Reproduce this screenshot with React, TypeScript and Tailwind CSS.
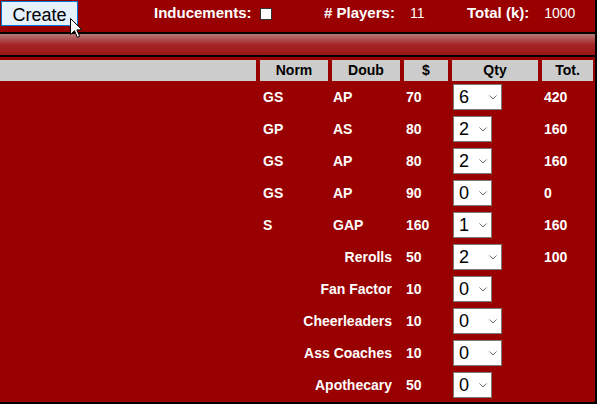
import React from "react";

type PlayerRow = {
  norm: string;
  doub: string;
  cost: number;
  qty: string;
  wide?: boolean;
  total: string;
};

type ExtraRow = {
  label: string;
  cost: number;
  qty: string;
  wide?: boolean;
  total?: string;
};

const players: PlayerRow[] = [
  { norm: "GS", doub: "AP", cost: 70, qty: "6", wide: true, total: "420" },
  { norm: "GP", doub: "AS", cost: 80, qty: "2", total: "160" },
  { norm: "GS", doub: "AP", cost: 80, qty: "2", total: "160" },
  { norm: "GS", doub: "AP", cost: 90, qty: "0", total: "0" },
  { norm: "S", doub: "GAP", cost: 160, qty: "1", total: "160" },
];

const extras: ExtraRow[] = [
  { label: "Rerolls", cost: 50, qty: "2", wide: true, total: "100" },
  { label: "Fan Factor", cost: 10, qty: "0" },
  { label: "Cheerleaders", cost: 10, qty: "0", wide: true },
  { label: "Ass Coaches", cost: 10, qty: "0", wide: true },
  { label: "Apothecary", cost: 50, qty: "0" },
];

const GRID =
  "grid grid-cols-[256px_68px_68px_44px_86px_51px] gap-x-1";

function QtySelect({ value, wide }: { value: string; wide?: boolean }) {
  return (
    <div className={wide ? "relative ml-px w-[49px]" : "relative ml-px w-[39px]"}>
      <select
        defaultValue={value}
        className="block h-[26px] w-full appearance-none rounded-none border border-[#7a7a7a] bg-white pl-[5px] font-['Liberation_Sans',Arial,sans-serif] text-[18px] font-normal leading-none text-black outline-none"
      >
        {["0", "1", "2", "3", "4", "5", "6", "7", "8"].map((o) => (
          <option key={o} value={o}>
            {o}
          </option>
        ))}
      </select>
      <svg
        className="pointer-events-none absolute right-[5px] top-[11px]"
        width="8"
        height="5"
        viewBox="0 0 8 5"
      >
        <path d="M0.5 0.5 L4 4 L7.5 0.5" fill="none" stroke="#6b6b6b" strokeWidth="1" />
      </svg>
    </div>
  );
}

function Cursor() {
  return (
    <svg
      className="pointer-events-none absolute left-[70px] top-[18px]"
      width="13"
      height="21"
      viewBox="0 0 13 21"
    >
      <path
        d="M0.5 0.5 L0.5 16.5 L4.5 12.7 L7.3 19.3 L9.6 18.3 L6.9 11.9 L12 11.9 Z"
        fill="white"
        stroke="black"
        strokeWidth="1"
        strokeLinejoin="round"
      />
    </svg>
  );
}

export default function App() {
  return (
    <div className="relative h-[404px] w-[597px] overflow-hidden border-r-2 border-b-2 border-black bg-[#990000] font-['Liberation_Sans',Arial,sans-serif] text-white">
      {/* top toolbar */}
      <div className="h-[32px] pt-px">
        <div className="flex h-[25px] items-center">
          <button
            type="button"
            className="ml-px h-[25px] w-[77px] border border-[#0078d7] bg-[#e5f1fb] text-[18px] text-black"
          >
            Create
          </button>
          <span className="ml-[76px] w-[106px] text-[15px] font-bold">Inducements:</span>
          <span className="h-[12px] w-[12px] border border-[#333] bg-white" />
          <span className="ml-[52px] w-[143px] text-[15px]">
            <b># Players:</b>
            <span className="ml-[15px] text-[14px]">11</span>
          </span>
          <span className="text-[15px]">
            <b>Total (k):</b>
            <span className="ml-[15px] text-[14px]">1000</span>
          </span>
        </div>
        <Cursor />
      </div>

      {/* banner */}
      <div className="h-[2px] bg-black" />
      <div className="h-[21px] bg-[linear-gradient(to_bottom,#b87a7a,#a42626_50%,#9b1414)]" />
      <div className="h-[2px] bg-black" />

      {/* table header */}
      <div className={`${GRID} mt-[3px] h-5 text-[14px] font-bold text-black`}>
        <div className="bg-[#cccccc]" />
        <div className="flex items-center justify-center bg-[#cccccc]">Norm</div>
        <div className="flex items-center justify-center bg-[#cccccc]">Doub</div>
        <div className="flex items-center justify-center bg-[#cccccc]">$</div>
        <div className="flex items-center justify-center bg-[#cccccc]">Qty</div>
        <div className="flex items-center justify-center bg-[#cccccc]">Tot.</div>
      </div>

      {/* players */}
      <div className="mt-px text-[14px] font-bold">
        {players.map((p, i) => (
          <div key={i} className={`${GRID} h-8 items-center`}>
            <div />
            <div className="pl-[3px]">{p.norm}</div>
            <div className="pl-px">{p.doub}</div>
            <div className="pl-0.5">{p.cost}</div>
            <QtySelect value={p.qty} wide={p.wide} />
            <div className="pl-0.5">{p.total}</div>
          </div>
        ))}
        {extras.map((e) => (
          <div key={e.label} className={`${GRID} h-8 items-center`}>
            <div />
            <div className="col-span-2 pr-2 text-right">{e.label}</div>
            <div className="pl-0.5">{e.cost}</div>
            <QtySelect value={e.qty} wide={e.wide} />
            <div className="pl-0.5">{e.total}</div>
          </div>
        ))}
      </div>
    </div>
  );
}
